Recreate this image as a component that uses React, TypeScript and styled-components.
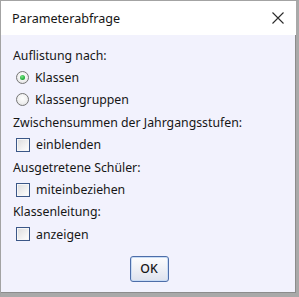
import styled, { createGlobalStyle } from "styled-components";

const GlobalStyle = createGlobalStyle`
  html, body {
    margin: 0;
    padding: 0;
    background: #ffffff;
  }
  * { box-sizing: border-box; }
`;

const Window = styled.div`
  width: 299px;
  height: 297px;
  display: flex;
  flex-direction: column;
  border-top: 1px solid #a3a3a3;
  border-left: 1px solid #a3a3a3;
  border-right: 3px solid #a9a9a9;
  border-bottom: 4px solid #a9a9a9;
  box-shadow: inset -1px -1px 0 #8c8c8c;
  background: #f2f2fd;
  font-family: "Noto Sans", "Open Sans", sans-serif;
  color: #161616;
`;

const TitleBar = styled.div`
  height: 34px;
  flex: none;
  background: #ffffff;
  display: flex;
  align-items: center;
  justify-content: space-between;
  padding: 0 12px 0 11px;
  font-size: 12.6px;
`;

const CloseButton = styled.svg`
  width: 12px;
  height: 12px;
`;

const Body = styled.div`
  flex: 1;
  display: flex;
  flex-direction: column;
  padding: 9px 12px 0 12px;
  font-size: 12.3px;
`;

const Row = styled.div<{ $indent?: boolean }>`
  height: 22.4px;
  display: flex;
  align-items: center;
  gap: 6px;
  padding-left: ${({ $indent }) => ($indent ? "3px" : "0")};
`;

const Radio = styled.span<{ $checked?: boolean }>`
  width: 13px;
  height: 13px;
  border-radius: 50%;
  border: 1px solid #767676;
  background: radial-gradient(circle at 50% 40%, #ffffff 0%, #f0f0f0 55%, #d6d6d6 100%);
  display: flex;
  align-items: center;
  justify-content: center;
  flex: none;

  &::after {
    content: "";
    display: ${({ $checked }) => ($checked ? "block" : "none")};
    width: 5px;
    height: 5px;
    border-radius: 50%;
    background: radial-gradient(circle at 40% 35%, #7de38a 0%, #24b23c 60%, #168a2a 100%);
  }
`;

const CheckBox = styled.span`
  width: 14px;
  height: 14px;
  border: 1px solid #3b5787;
  background: linear-gradient(135deg, #dcdcdc 0%, #f2f2f2 60%, #ffffff 100%);
  box-shadow: inset 0 0 0 1px #f7f7f7;
  flex: none;
`;

const Footer = styled.div`
  display: flex;
  justify-content: center;
  padding-top: 10px;
  padding-left: 1px;
`;

const OkButton = styled.button`
  width: 39px;
  height: 26px;
  border: 1px solid #4d6ea9;
  border-radius: 3px;
  background: linear-gradient(#fdfdfe 0%, #eef0f6 50%, #dde2ee 100%);
  box-shadow: inset 0 0 0 1px #c9dcf5;
  font-family: "Noto Sans", "Open Sans", sans-serif;
  font-size: 12.3px;
  font-weight: 500;
  color: #161616;
  padding: 0;
`;

export default function App() {
  return (
    <>
      <GlobalStyle />
      <Window>
        <TitleBar>
          <span>Parameterabfrage</span>
          <CloseButton viewBox="0 0 12 12">
            <path d="M0.5 0.5 L11.5 11.5 M11.5 0.5 L0.5 11.5" stroke="#2b2b2b" strokeWidth="1.1" fill="none" />
          </CloseButton>
        </TitleBar>
        <Body>
          <Row>Auflistung nach:</Row>
          <Row $indent><Radio $checked />Klassen</Row>
          <Row $indent><Radio />Klassengruppen</Row>
          <Row>Zwischensummen der Jahrgangsstufen:</Row>
          <Row $indent><CheckBox />einblenden</Row>
          <Row>Ausgetretene Schüler:</Row>
          <Row $indent><CheckBox />miteinbeziehen</Row>
          <Row>Klassenleitung:</Row>
          <Row $indent><CheckBox />anzeigen</Row>
          <Footer>
            <OkButton>OK</OkButton>
          </Footer>
        </Body>
      </Window>
    </>
  );
}
